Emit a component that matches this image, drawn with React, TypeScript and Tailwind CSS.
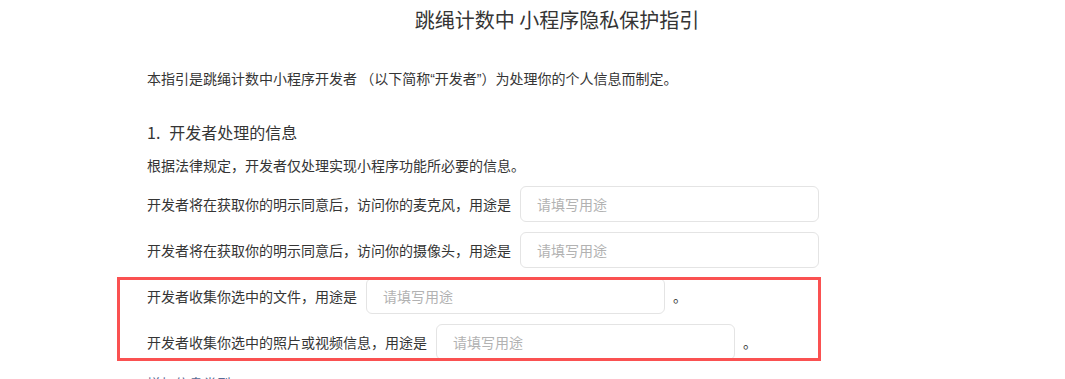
const rows = [
  { label: "开发者将在获取你的明示同意后，访问你的麦克风，用途是", dot: false },
  { label: "开发者将在获取你的明示同意后，访问你的摄像头，用途是", dot: false },
  { label: "开发者收集你选中的文件，用途是", dot: true },
  { label: "开发者收集你选中的照片或视频信息，用途是", dot: true },
];

export default function App() {
  return (
    <div
      className="relative min-h-[379px] overflow-hidden bg-white text-[#353535]"
      style={{ fontFamily: '"Noto Sans CJK SC", "Noto Sans", sans-serif' }}
    >
      <div className="ml-[147px] w-[820px] pt-[6px]">
        <h1 className="text-center text-[20px] leading-[28px]">跳绳计数中 小程序隐私保护指引</h1>

        <p className="mt-[34px] text-[14px] leading-[20px]">
          本指引是跳绳计数中小程序开发者 （以下简称
          <span className="font-['Liberation_Sans']">“</span>开发者
          <span className="font-['Liberation_Sans']">”</span>）为处理你的个人信息而制定。
        </p>

        <h2 className="mt-[31px] text-[16px] leading-[24px]">
          <span className="mr-[9px]">1.</span>开发者处理的信息
        </h2>
        <p className="mt-[11px] text-[14px] leading-[20px]">根据法律规定，开发者仅处理实现小程序功能所必要的信息。</p>

        <div className="mt-[11px] flex flex-col gap-[10px]">
          {rows.map((row) => (
            <div key={row.label} className="flex h-[36px] items-center text-[14px]">
              <span>{row.label}</span>
              <div className="ml-[9px] flex h-[36px] w-[299px] items-center rounded-[6px] border border-[#e4e4e4] bg-white px-[16px] text-[#b2b2b2]">
                请填写用途
              </div>
              {row.dot && <span className="ml-[8px]">。</span>}
            </div>
          ))}
        </div>

        <div className="mt-[13px] text-[14px] leading-[20px] text-[#576b95]">增加信息类型</div>
      </div>

      {/* highlight box */}
      <div className="pointer-events-none absolute left-[117px] top-[277px] h-[84px] w-[704px] border-[3.5px] border-[#fa5151]" />
    </div>
  );
}
